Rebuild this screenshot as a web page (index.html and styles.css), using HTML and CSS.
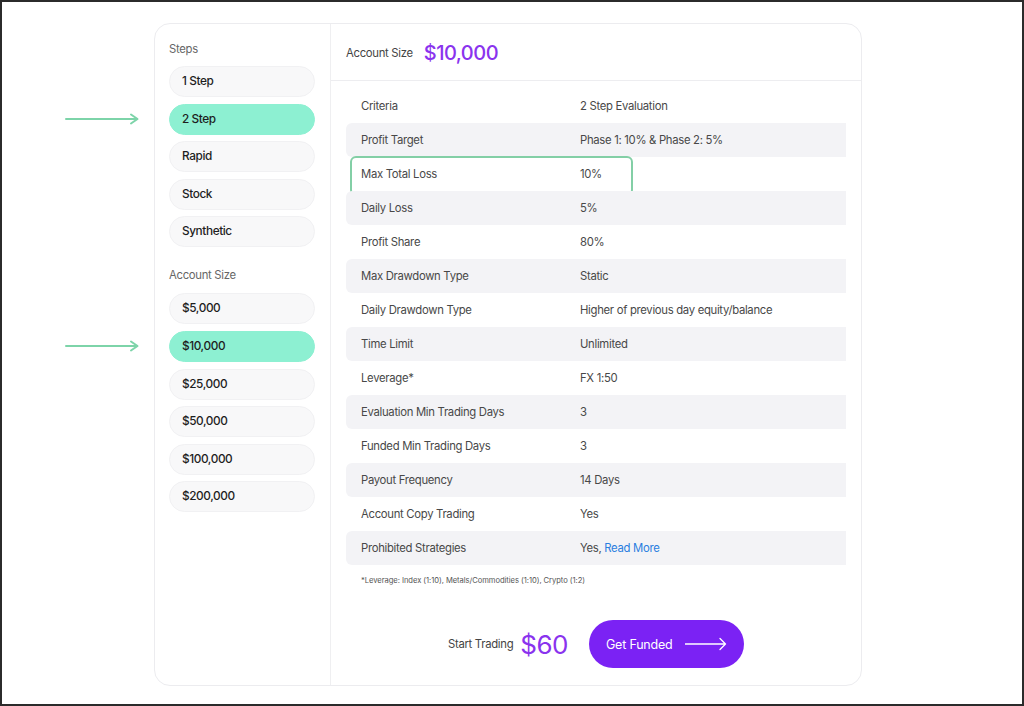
FILE: index.html
```html
<!DOCTYPE html>
<html lang="en">
<head>
    <meta charset="UTF-8">
    <meta name="viewport" content="width=device-width, initial-scale=1.0">
    <title>Challenge Pricing</title>
    <link rel="stylesheet" href="styles.css">
</head>
<body>
    <div class="frame">
        <div class="card">
            <aside class="sidebar">
                <div class="group-label">Steps</div>
                <div class="pill-list">
                    <div class="pill">1 Step</div>
                    <div class="pill active">2 Step
                        <svg class="pointer" width="76" height="12" viewBox="0 0 76 12"><path d="M1 6 H72 M66 1.5 L72.5 6 L66 10.5" fill="none" stroke="#7dd4a9" stroke-width="2" stroke-linecap="round" stroke-linejoin="round"/></svg>
                    </div>
                    <div class="pill">Rapid</div>
                    <div class="pill">Stock</div>
                    <div class="pill">Synthetic</div>
                </div>

                <div class="group-label second">Account Size</div>
                <div class="pill-list">
                    <div class="pill">$5,000</div>
                    <div class="pill active">$10,000
                        <svg class="pointer" width="76" height="12" viewBox="0 0 76 12"><path d="M1 6 H72 M66 1.5 L72.5 6 L66 10.5" fill="none" stroke="#7dd4a9" stroke-width="2" stroke-linecap="round" stroke-linejoin="round"/></svg>
                    </div>
                    <div class="pill">$25,000</div>
                    <div class="pill">$50,000</div>
                    <div class="pill">$100,000</div>
                    <div class="pill">$200,000</div>
                </div>
            </aside>

            <main class="main">
                <div class="main-header">
                    <span class="header-label">Account Size</span>
                    <span class="header-value">$10,000</span>
                </div>

                <div class="rules">
                    <div class="row"><span class="key">Criteria</span><span class="val">2 Step Evaluation</span></div>
                    <div class="row"><span class="key">Profit Target</span><span class="val">Phase 1: 10% &amp; Phase 2: 5%</span></div>
                    <div class="row highlight"><span class="key">Max Total Loss</span><span class="val">10%</span></div>
                    <div class="row"><span class="key">Daily Loss</span><span class="val">5%</span></div>
                    <div class="row"><span class="key">Profit Share</span><span class="val">80%</span></div>
                    <div class="row"><span class="key">Max Drawdown Type</span><span class="val">Static</span></div>
                    <div class="row"><span class="key">Daily Drawdown Type</span><span class="val">Higher of previous day equity/balance</span></div>
                    <div class="row"><span class="key">Time Limit</span><span class="val">Unlimited</span></div>
                    <div class="row"><span class="key">Leverage*</span><span class="val">FX 1:50</span></div>
                    <div class="row"><span class="key">Evaluation Min Trading Days</span><span class="val">3</span></div>
                    <div class="row"><span class="key">Funded Min Trading Days</span><span class="val">3</span></div>
                    <div class="row"><span class="key">Payout Frequency</span><span class="val">14 Days</span></div>
                    <div class="row"><span class="key">Account Copy Trading</span><span class="val">Yes</span></div>
                    <div class="row"><span class="key">Prohibited Strategies</span><span class="val">Yes, <a href="#" class="link">Read More</a></span></div>
                </div>

                <p class="footnote">*Leverage: Index (1:10), Metals/Commodities (1:10), Crypto (1:2)</p>

                <div class="cta">
                    <span class="cta-label">Start Trading</span>
                    <span class="cta-price">$60</span>
                    <button class="cta-button">
                        Get Funded
                        <svg width="42" height="14" viewBox="0 0 42 14"><path d="M0 7 H40.5 M35 1.5 L40.5 7 L35 12.5" fill="none" stroke="#fff" stroke-width="1.3" stroke-linecap="round" stroke-linejoin="round"/></svg>
                    </button>
                </div>
            </main>
        </div>
    </div>
</body>
</html>
```

FILE: styles.css
```css
* {
    box-sizing: border-box;
}

html, body {
    margin: 0;
    padding: 0;
    background: #fff;
}

body {
    font-family: Inter, "Noto Sans", sans-serif;
    color: #333;
}

.frame {
    width: 1024px;
    height: 706px;
    border: 2px solid #2b2b2b;
    padding: 21px 0 0 152px;
}

.card {
    display: flex;
    width: 708px;
    height: 663px;
    border: 1px solid #ececef;
    border-radius: 16px;
}

.sidebar {
    width: 176px;
    padding: 17px 15px 0 14px;
    border-right: 1px solid #efeff1;
}

.group-label {
    font-size: 11.3px;
    line-height: 16px;
    letter-spacing: -0.3px;
    color: #666;
    margin-bottom: 9px;
}

.group-label.second {
    margin-top: 20px;
    margin-bottom: 10px;
}

.pill-list {
    display: flex;
    flex-direction: column;
    gap: 6.6px;
}

.pill {
    position: relative;
    height: 31px;
    line-height: 29px;
    padding-left: 12px;
    border: 1px solid #f1f1f3;
    border-radius: 16px;
    background: #f8f8f9;
    font-size: 11.8px;
    font-weight: 500;
    letter-spacing: -0.4px;
    color: #1e1e1e;
}

.pill.active {
    background: #8df0d2;
    border-color: #8df0d2;
}

.pointer {
    position: absolute;
    left: -105px;
    top: 8px;
}

.main {
    flex: 1;
    display: flex;
    flex-direction: column;
}

.main-header {
    height: 57px;
    padding: 1px 15px 0;
    display: flex;
    align-items: center;
    gap: 11px;
    border-bottom: 1px solid #ededf0;
}

.header-label {
    font-size: 11.3px;
    letter-spacing: -0.3px;
    color: #444;
}

.header-value {
    font-size: 20px;
    font-weight: 500;
    color: #8a33ee;
    letter-spacing: -0.5px;
}

.rules {
    margin: 8px 15px 0;
}

.row {
    position: relative;
    display: flex;
    height: 34px;
    align-items: center;
    padding-left: 15px;
    font-size: 11.3px;
    letter-spacing: -0.3px;
    color: #484848;
}

.row:nth-child(even) {
    background: #f3f3f6;
    border-radius: 6px 0 0 6px;
}

.key {
    width: 219px;
}

.highlight::after {
    content: "";
    position: absolute;
    left: 4px;
    top: -1px;
    width: 279px;
    height: 36px;
    border: 2px solid #83cfa6;
    border-radius: 6px;
}

.link {
    color: #2a7ee0;
    text-decoration: none;
}

.footnote {
    margin: 10px 0 0 30px;
    font-size: 7.6px;
    line-height: 12px;
    letter-spacing: -0.05px;
    color: #555;
}

.cta {
    display: flex;
    align-items: center;
    justify-content: center;
    margin-top: 33px;
}

.cta-label {
    font-size: 11.3px;
    letter-spacing: -0.3px;
    color: #444;
    margin-right: 7px;
}

.cta-price {
    font-size: 26px;
    color: #8a33ee;
    margin-right: 21px;
    letter-spacing: -0.5px;
}

.cta-button {
    display: flex;
    align-items: center;
    justify-content: space-between;
    width: 155px;
    height: 48px;
    padding: 0 17px;
    border: none;
    border-radius: 24px;
    background: #7b22f4;
    color: #fff;
    font-family: inherit;
    font-size: 12.5px;
    letter-spacing: -0.2px;
    cursor: pointer;
}
```
